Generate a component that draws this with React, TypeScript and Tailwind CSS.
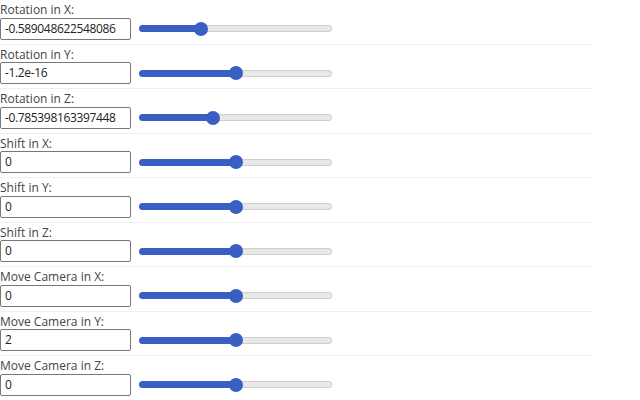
import React from 'react';

type Control = {
  label: string;
  value: string;
  pos: number; // thumb position 0..1
};

const controls: Control[] = [
  { label: 'Rotation in X:', value: '-0.589048622548086', pos: 0.31 },
  { label: 'Rotation in Y:', value: '-1.2e-16', pos: 0.5 },
  { label: 'Rotation in Z:', value: '-0.785398163397448', pos: 0.375 },
  { label: 'Shift in X:', value: '0', pos: 0.5 },
  { label: 'Shift in Y:', value: '0', pos: 0.5 },
  { label: 'Shift in Z:', value: '0', pos: 0.5 },
  { label: 'Move Camera in X:', value: '0', pos: 0.5 },
  { label: 'Move Camera in Y:', value: '2', pos: 0.505 },
  { label: 'Move Camera in Z:', value: '0', pos: 0.5 },
];

// static slider drawn in flow: filled part, thumb, empty part
function Slider({ pos }: { pos: number }) {
  const filled = 7 + pos * (193 - 14);
  return (
    <div className="flex items-center w-[193px] h-[14px]">
      <div className="h-[7px] rounded-l-full bg-[#3a5fc4] shrink-0" style={{ width: filled }} />
      <div className="w-[14px] h-[14px] -mx-[7px] rounded-full bg-[#3a5fc4] shrink-0 z-10" />
      <div className="flex-1 h-[7px] rounded-r-full bg-[#e8e8e8] border border-l-0 border-[#cfcfcf]" />
    </div>
  );
}

export default function App() {
  return (
    <div className="w-[640px] h-[400px] bg-white overflow-hidden font-['Open_Sans',sans-serif]">
      <div className="w-[592px]">
        {controls.map((c) => (
          <div key={c.label} className="border-b border-[#efefef] pb-[4px]">
            <div className="text-[12px] leading-[17.5px] pt-[1px] h-[17.5px] text-[#444]">{c.label}</div>
            <div className="flex items-center gap-[8px]">
              <div className="w-[131px] h-[22px] border border-[#777] rounded-[2px] px-[4px] text-[12px] tracking-[-0.35px] leading-[20px] text-[#222] whitespace-nowrap overflow-hidden">
                {c.value}
              </div>
              <Slider pos={c.pos} />
            </div>
          </div>
        ))}
      </div>
    </div>
  );
}
